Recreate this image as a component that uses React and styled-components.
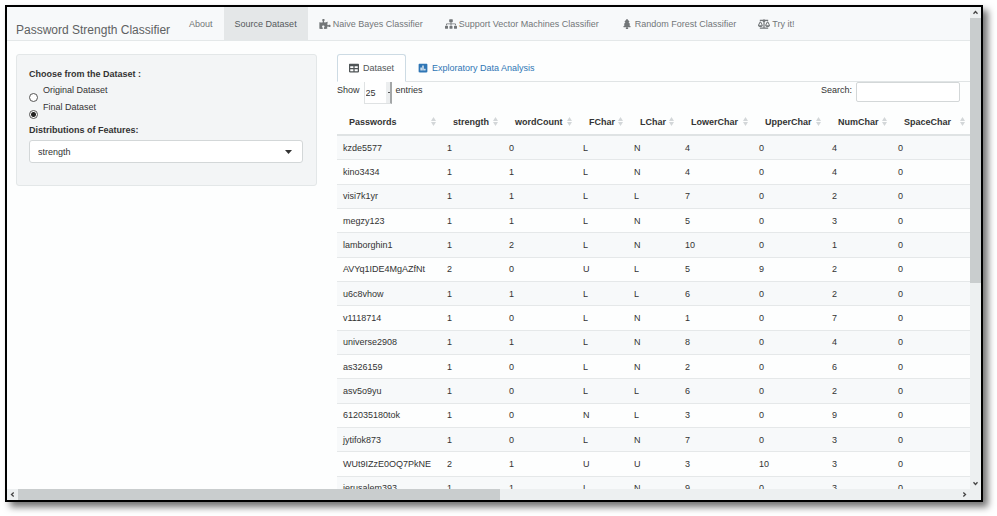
import React, { useState } from "react";
import styled, { createGlobalStyle } from "styled-components";
import {
  FaPuzzlePiece,
  FaSitemap,
  FaTree,
  FaBalanceScale,
  FaTable,
  FaPoll,
} from "react-icons/fa";

const FONT = '"Liberation Sans", Arial, sans-serif';

const GlobalStyle = createGlobalStyle`
  * { box-sizing: border-box; }
  html, body { margin: 0; height: 100%; overflow: hidden; background: #fff; }
  #root { height: 100%; }
  body, button, input, select { font-family: ${FONT}; font-size: 9px; color: #333; }
`;

const Page = styled.div`
  height: 100vh;
  padding: 5px 14px 14px 5px;
`;

const Frame = styled.div`
  height: 100%;
  border: 2px solid #000;
  box-shadow: 5px 5px 7px rgba(0, 0, 0, 0.55);
  background: #fdfefe;
  display: grid;
  grid-template-columns: minmax(0, 1fr) 11px;
  grid-template-rows: minmax(0, 1fr) 11px;
`;

const Viewport = styled.div`
  overflow: auto;
  scrollbar-width: none;
`;

const Navbar = styled.nav`
  display: flex;
  height: 34px;
  background: #f7f9fa;
  border-bottom: 1px solid #e4e8e9;
`;

const Brand = styled.a`
  padding: 0 8px 0 9px;
  font-size: 12px;
  line-height: 46px;
  color: #5e6162;
  text-decoration: none;
  white-space: nowrap;
`;

const NavLink = styled.a`
  display: flex;
  align-items: center;
  gap: 2px;
  height: 33px;
  padding: 0 11px;
  color: ${(p) => (p.$active ? "#55595b" : "#727678")};
  background: ${(p) => (p.$active ? "#e4e7e8" : "transparent")};
  text-decoration: none;
  white-space: nowrap;
  svg { width: 12px; height: 10px; }
`;

const Columns = styled.main`
  display: grid;
  grid-template-columns: minmax(0, 301fr) minmax(0, 633fr);
  gap: 20px;
  padding: 13px 0 0 9px;
`;

const Well = styled.form`
  height: 132px;
  padding: 11px 13px 11px 12px;
  background: #f3f5f6;
  border: 1px solid #e3e7e8;
  border-radius: 3px;
`;

const GroupTitle = styled.legend`
  padding: 0;
  font-weight: bold;
  line-height: 16px;
`;

const RadioGroup = styled.fieldset`
  border: 0;
  margin: 0;
  padding: 0;
  min-width: 0;
`;

const RadioLabel = styled.label`
  display: flex;
  gap: 5px;
  height: 17px;
  line-height: 17px;
`;

const Radio = styled.input`
  appearance: none;
  width: 9px;
  height: 9px;
  margin: 11px 0 0;
  flex: none;
  border: 1px solid #555;
  border-radius: 50%;
  background: #fff;
  &:checked { background: radial-gradient(circle, #222 0 2px, #fff 3px); }
`;

const FieldLabel = styled.label`
  display: block;
  margin: 6px 0 2px;
  font-weight: bold;
  line-height: 16px;
`;

const SelectBox = styled.div`
  display: grid;
  align-items: center;
  svg {
    grid-area: 1 / 1;
    justify-self: end;
    margin-right: 11px;
    width: 7px;
    height: 4px;
    pointer-events: none;
  }
`;

const FeatureSelect = styled.select`
  grid-area: 1 / 1;
  appearance: none;
  width: 100%;
  height: 23px;
  padding: 0 8px;
  background: #fff;
  border: 1px solid #d3d7d8;
  border-radius: 3px;
`;

const Tabs = styled.div`
  display: flex;
  height: 28px;
  border-bottom: 1px solid #e0e4e5;
`;

const Tab = styled.button`
  display: flex;
  align-items: center;
  gap: 4px;
  height: 28px;
  padding: 0 11px;
  background: ${(p) => (p.$active ? "#fff" : "transparent")};
  border: 1px solid ${(p) => (p.$active ? "#cddbe4" : "transparent")};
  border-bottom-color: ${(p) => (p.$active ? "#fff" : "transparent")};
  border-radius: 3px 3px 0 0;
  color: ${(p) => (p.$active ? "#505557" : "#2f76b5")};
  svg { width: 10px; height: 10px; }
`;

const Controls = styled.div`
  display: flex;
  justify-content: space-between;
  height: 27px;
  padding-right: 10px;
`;

const ControlLabel = styled.label`
  display: flex;
  gap: 4px;
  line-height: 17px;
`;

const LengthSelect = styled.select`
  appearance: none;
  width: 28px;
  height: 22px;
  padding: 0 1px;
  color: #333;
  border: 1px solid #dfe2e3;
  border-top: 0;
  border-right: 2px solid #a4a7a8;
  background: linear-gradient(#555, #555) 100% 50% / 2px 1px no-repeat,
    linear-gradient(90deg, #fff 84%, #eceeef 84%);
`;

const SearchInput = styled.input`
  width: 104px;
  height: 20px;
  border: 1px solid #d3d7d8;
  border-radius: 2px;
  background: #fff;
`;

const DataTable = styled.table`
  width: 100%;
  height: 392px;
  table-layout: fixed;
  border-collapse: separate;
  border-spacing: 0;
`;

const Heading = styled.th`
  height: 27px;
  padding: 0 5px 0 12px;
  border-bottom: 2px solid #dfe3e4;
  text-align: left;
`;

const HeadingContent = styled.span`
  display: flex;
  align-items: center;
  justify-content: space-between;
  svg { width: 5px; height: 9px; flex: none; }
`;

const Row = styled.tr`
  background: ${(p) => (p.$odd ? "#f7f9fa" : "#fdfefe")};
`;

const Cell = styled.td`
  height: 24px;
  padding: 0 0 0 6px;
  border-bottom: 1px solid #e5e8e9;
  white-space: nowrap;
`;

const ScrollTrack = styled.div`
  display: flex;
  flex-direction: ${(p) => (p.$vertical ? "column" : "row")};
  background: #edf0f1;
`;

const ScrollButton = styled.button`
  display: grid;
  place-items: center;
  flex: none;
  width: 11px;
  height: 11px;
  padding: 0;
  border: 0;
  background: #edf0f1;
  svg { width: 5px; height: 5px; transform: rotate(${(p) => p.$turn}deg); }
`;

const ScrollSpace = styled.div`
  flex: 1;
`;

const ScrollThumb = styled.div`
  flex: 0 0 ${(p) => p.$size};
  background: #c9cdce;
`;

const Corner = styled.div`
  background: #edf0f1;
`;

const SortIcon = () => (
  <svg viewBox="0 0 5 9" aria-hidden="true">
    <path d="M2.5 0 5 4H0zM2.5 9 5 5H0z" fill="#d3d7d9" />
  </svg>
);

const Arrow = ({ turn, label }) => (
  <ScrollButton type="button" $turn={turn} aria-label={label}>
    <svg viewBox="0 0 5 5">
      <path d="M.5 3.7 2.5 1.5 4.5 3.7" fill="none" stroke="#444" strokeWidth="1.3" />
    </svg>
  </ScrollButton>
);

const NAV = [
  { label: "About" },
  { label: "Source Dataset", active: true },
  { label: "Naive Bayes Classifier", Icon: FaPuzzlePiece },
  { label: "Support Vector Machines Classifier", Icon: FaSitemap },
  { label: "Random Forest Classifier", Icon: FaTree },
  { label: "Try it!", Icon: FaBalanceScale },
];

const COLUMNS = [
  ["Passwords", 104],
  ["strength", 62],
  ["wordCount", 74],
  ["FChar", 51],
  ["LChar", 51],
  ["LowerChar", 74],
  ["UpperChar", 73],
  ["NumChar", 66],
  ["SpaceChar", 78],
];

const ROWS = [
  ["kzde5577", 1, 0, "L", "N", 4, 0, 4, 0],
  ["kino3434", 1, 1, "L", "N", 4, 0, 4, 0],
  ["visi7k1yr", 1, 1, "L", "L", 7, 0, 2, 0],
  ["megzy123", 1, 1, "L", "N", 5, 0, 3, 0],
  ["lamborghin1", 1, 2, "L", "N", 10, 0, 1, 0],
  ["AVYq1IDE4MgAZfNt", 2, 0, "U", "L", 5, 9, 2, 0],
  ["u6c8vhow", 1, 1, "L", "L", 6, 0, 2, 0],
  ["v1118714", 1, 0, "L", "N", 1, 0, 7, 0],
  ["universe2908", 1, 1, "L", "N", 8, 0, 4, 0],
  ["as326159", 1, 0, "L", "N", 2, 0, 6, 0],
  ["asv5o9yu", 1, 0, "L", "L", 6, 0, 2, 0],
  ["612035180tok", 1, 0, "N", "L", 3, 0, 9, 0],
  ["jytifok873", 1, 0, "L", "N", 7, 0, 3, 0],
  ["WUt9IZzE0OQ7PkNE", 2, 1, "U", "U", 3, 10, 3, 0],
  ["jerusalem393", 1, 1, "L", "N", 9, 0, 3, 0],
];

export default function App() {
  const [dataset, setDataset] = useState("final");
  return (
    <Page>
      <GlobalStyle />
      <Frame>
        <Viewport>
          <Navbar>
            <Brand href="#">Password Strength Classifier</Brand>
            {NAV.map(({ label, active, Icon }) => (
              <NavLink key={label} href="#" $active={active}>
                {Icon && <Icon />}
                {label}
              </NavLink>
            ))}
          </Navbar>
          <Columns>
            <Well>
              <RadioGroup>
                <GroupTitle>Choose from the Dataset :</GroupTitle>
                {[["original", "Original Dataset"], ["final", "Final Dataset"]].map(([id, text]) => (
                  <RadioLabel key={id}>
                    <Radio
                      type="radio"
                      name="dataset"
                      checked={dataset === id}
                      onChange={() => setDataset(id)}
                    />
                    {text}
                  </RadioLabel>
                ))}
              </RadioGroup>
              <FieldLabel htmlFor="feature">Distributions of Features:</FieldLabel>
              <SelectBox>
                <FeatureSelect id="feature" defaultValue="strength">
                  <option>strength</option>
                </FeatureSelect>
                <svg viewBox="0 0 7 4" aria-hidden="true">
                  <path d="M0 0h7L3.500 4z" fill="#333" />
                </svg>
              </SelectBox>
            </Well>
            <section>
              <Tabs role="tablist">
                <Tab type="button" role="tab" aria-selected="true" $active>
                  <FaTable />
                  Dataset
                </Tab>
                <Tab type="button" role="tab" aria-selected="false">
                  <FaPoll />
                  Exploratory Data Analysis
                </Tab>
              </Tabs>
              <Controls>
                <ControlLabel>
                  Show
                  <LengthSelect defaultValue="25">
                    <option>25</option>
                  </LengthSelect>
                  entries
                </ControlLabel>
                <ControlLabel>
                  Search:
                  <SearchInput type="search" />
                </ControlLabel>
              </Controls>
              <DataTable>
                <colgroup>
                  {COLUMNS.map(([name, width]) => (
                    <col key={name} width={width} />
                  ))}
                </colgroup>
                <thead>
                  <tr>
                    {COLUMNS.map(([name]) => (
                      <Heading key={name} scope="col">
                        <HeadingContent>
                          {name}
                          <SortIcon />
                        </HeadingContent>
                      </Heading>
                    ))}
                  </tr>
                </thead>
                <tbody>
                  {ROWS.map((row, i) => (
                    <Row key={row[0]} $odd={i % 2 === 0}>
                      {row.map((value, j) => (
                        <Cell key={j}>{value}</Cell>
                      ))}
                    </Row>
                  ))}
                </tbody>
              </DataTable>
            </section>
          </Columns>
        </Viewport>
        <ScrollTrack $vertical>
          <Arrow turn={0} label="Scroll up" />
          <ScrollThumb $size="55%" />
          <ScrollSpace />
          <Arrow turn={180} label="Scroll down" />
        </ScrollTrack>
        <ScrollTrack>
          <Arrow turn={270} label="Scroll left" />
          <ScrollThumb $size="50%" />
          <ScrollSpace />
          <Arrow turn={90} label="Scroll right" />
        </ScrollTrack>
        <Corner />
      </Frame>
    </Page>
  );
}
